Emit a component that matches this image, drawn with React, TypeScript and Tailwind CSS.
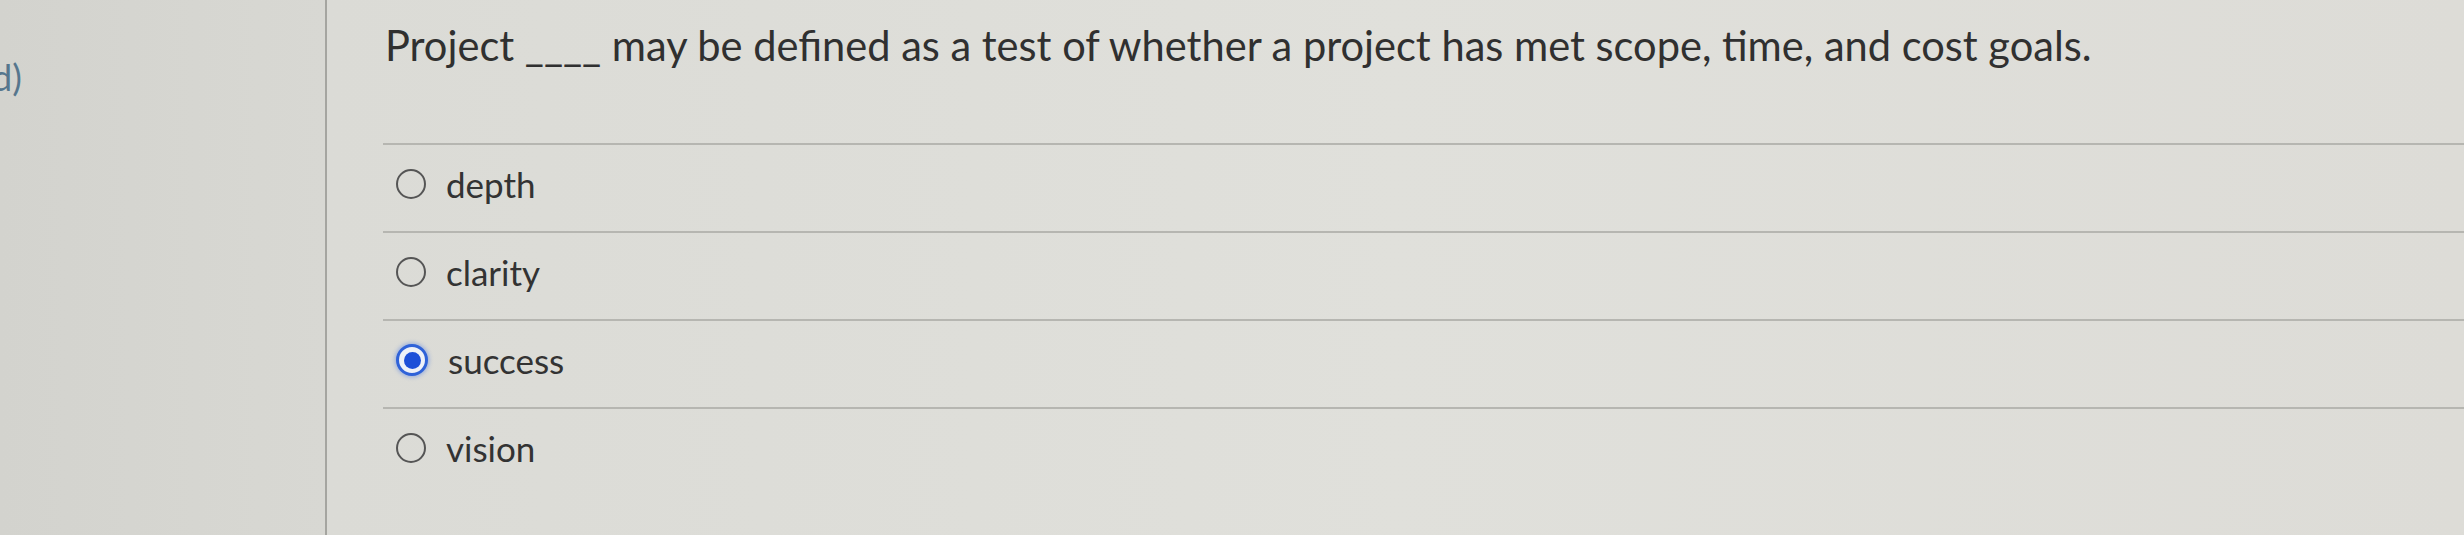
import { useState } from "react";

const OPTIONS = ["depth", "clarity", "success", "vision"];

function Radio({ checked }: { checked: boolean }) {
  if (checked) {
    return (
      <span className="flex h-[32px] w-[32px] shrink-0 items-center justify-center rounded-full border-[3px] border-[#2f62d8] bg-[#eef1f8] shadow-[0_0_4px_1px_rgba(60,110,230,0.45)]">
        <span className="h-[17px] w-[17px] rounded-full bg-[#1d4fd8]" />
      </span>
    );
  }
  return (
    <span className="h-[30px] w-[30px] shrink-0 rounded-full border-[2.5px] border-[#555555]" />
  );
}

export default function App() {
  const [selected, setSelected] = useState("success");

  return (
    <div
      className="flex h-[535px] w-full overflow-hidden bg-[#dcdcd7] text-[#303030]"
      style={{ fontFamily: "Lato, 'Open Sans', sans-serif" }}
    >
      {/* Left gutter with question number */}
      <div className="w-[327px] shrink-0 border-r-2 border-[#a5a5a0] bg-gradient-to-r from-[#d3d3ce] to-[#d8d8d3]">
        <div className="-ml-[8px] pt-[57px] text-[36px] leading-[40px] text-[#56768d]">d)</div>
      </div>

      {/* Question panel */}
      <div className="flex-1 bg-gradient-to-r from-[#dbdbd6] via-[#e0e0db] to-[#dddcd7] pl-[56px]">
        <p className="pt-[20px] pl-[2px] text-[41.6px] leading-[50px] whitespace-nowrap">
          Project ____ may be defined as a test of whether a project has met scope, time, and cost goals.
        </p>

        <div className="mt-[73px]">
          {OPTIONS.map((opt) => (
            <label
              key={opt}
              onClick={() => setSelected(opt)}
              className="flex h-[88px] cursor-pointer items-center gap-[20px] border-t-2 border-[#b6b6b1] pb-[8px] pl-[13px]"
            >
              <Radio checked={selected === opt} />
              <span className="text-[35px] leading-[40px] text-[#333333]">{opt}</span>
            </label>
          ))}
        </div>
      </div>
    </div>
  );
}
